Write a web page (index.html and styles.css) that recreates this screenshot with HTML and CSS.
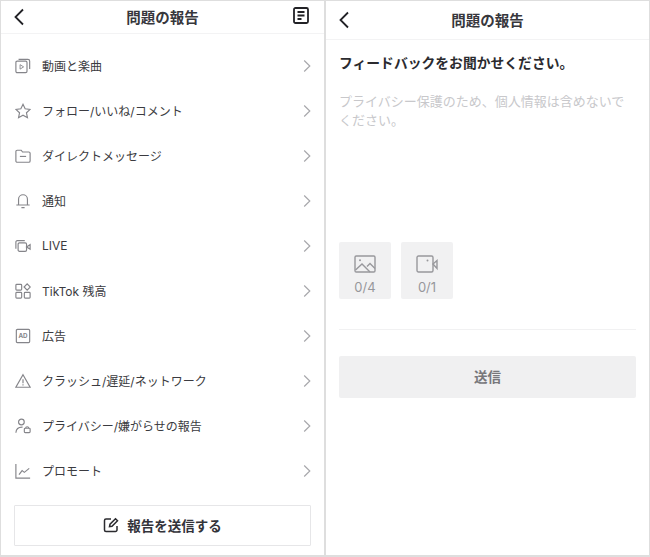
FILE: index.html
```html
<!DOCTYPE html>
<html lang="ja">
<head>
<meta charset="utf-8">
<title>問題の報告</title>
<link rel="stylesheet" href="styles.css">
</head>
<body>
<div class="screens">
  <section class="panel">
    <header class="bar bar-left">
      <svg class="back" viewBox="0 0 12 18"><path d="M10 1.500 2.500 9l7.500 7.500"/></svg>
      <h1>問題の報告</h1>
      <svg class="doc" viewBox="0 0 16 17"><rect x="1" y="1" width="14" height="15" rx="1.500"/><path d="M4.500 5h7M4.500 8.500h7M4.500 12h4"/></svg>
    </header>
    <ul class="list">
      <li class="row"><svg class="ico" viewBox="0 0 18 18"><rect x="1" y="3.500" width="12.500" height="13" rx="1.500"/><path d="M4 1.500h10.500a2 2 0 0 1 2 2v9"/><path d="M5.700 7.500v5l4-2.500z" stroke-width="1"/></svg><span>動画と楽曲</span><svg class="chev" viewBox="0 0 8 14"><path d="M1.200 1.500 6.800 7l-5.600 5.500"/></svg></li>
      <li class="row"><svg class="ico" viewBox="0 0 18 18"><path d="m9 1.500 2.400 5 5.600.700-4.100 3.800 1.100 5.500L9 13.800l-5 2.700 1.100-5.500L1 7.200l5.600-.7z"/></svg><span>フォロー/いいね/コメント</span><svg class="chev" viewBox="0 0 8 14"><path d="M1.200 1.500 6.800 7l-5.600 5.500"/></svg></li>
      <li class="row"><svg class="ico" viewBox="0 0 18 18"><path d="M1 4a1.500 1.500 0 0 1 1.500-1.500h4.500l1.500 2h7a1.500 1.500 0 0 1 1.500 1.500v8.500a1.500 1.500 0 0 1-1.500 1.500h-13A1.500 1.500 0 0 1 1 14.500z"/><path d="M5.500 9.500h7"/></svg><span>ダイレクトメッセージ</span><svg class="chev" viewBox="0 0 8 14"><path d="M1.200 1.500 6.800 7l-5.600 5.500"/></svg></li>
      <li class="row"><svg class="ico" viewBox="0 0 18 18"><path d="M1.500 13.500h15M4 13.500V7a5 5 0 0 1 10 0v6.500M7.200 16.500h3.600"/></svg><span>通知</span><svg class="chev" viewBox="0 0 8 14"><path d="M1.200 1.500 6.800 7l-5.600 5.500"/></svg></li>
      <li class="row"><svg class="ico" viewBox="0 0 18 18"><path d="M1 12V4.500A1.500 1.500 0 0 1 2.500 3H11"/><rect x="3.500" y="5.500" width="9.500" height="9.500" rx="1.500"/><path d="m13 10 4-2.500v5z"/></svg><span>LIVE</span><svg class="chev" viewBox="0 0 8 14"><path d="M1.200 1.500 6.800 7l-5.600 5.500"/></svg></li>
      <li class="row"><svg class="ico" viewBox="0 0 18 18"><rect x="1" y="1.500" width="6.500" height="6.500" rx="1"/><rect x="1" y="10.500" width="6.500" height="6.500" rx="1"/><rect x="10.500" y="10.500" width="6.500" height="6.500" rx="1"/><path d="m13.700 1 3.500 3.500-3.500 3.500-3.500-3.500z"/></svg><span>TikTok 残高</span><svg class="chev" viewBox="0 0 8 14"><path d="M1.200 1.500 6.800 7l-5.600 5.500"/></svg></li>
      <li class="row"><svg class="ico" viewBox="0 0 18 18"><rect x="1.500" y="1.500" width="15" height="15" rx="1.200"/><text x="9" y="11.500" class="ad">AD</text></svg><span>広告</span><svg class="chev" viewBox="0 0 8 14"><path d="M1.200 1.500 6.800 7l-5.600 5.500"/></svg></li>
      <li class="row"><svg class="ico" viewBox="0 0 18 18"><path d="M9 2 17 16H1z"/><path d="M9 7v4.500M9 12.700v1.300"/></svg><span>クラッシュ/遅延/ネットワーク</span><svg class="chev" viewBox="0 0 8 14"><path d="M1.200 1.500 6.800 7l-5.600 5.500"/></svg></li>
      <li class="row"><svg class="ico" viewBox="0 0 18 18"><circle cx="7.200" cy="4.500" r="3.200"/><path d="M1 16.500C1.300 12 3.700 10 8.500 10.200"/><rect x="10.500" y="11.500" width="6.500" height="5" rx="1"/><path d="M12 11.500a1.700 1.700 0 0 1 3.400 0"/></svg><span>プライバシー/嫌がらせの報告</span><svg class="chev" viewBox="0 0 8 14"><path d="M1.200 1.500 6.800 7l-5.600 5.500"/></svg></li>
      <li class="row"><svg class="ico" viewBox="0 0 18 18"><path d="M1 1V17H17"/><path d="m4.500 13 3.500-4.500 2.500 2L16 6"/></svg><span>プロモート</span><svg class="chev" viewBox="0 0 8 14"><path d="M1.200 1.500 6.800 7l-5.600 5.500"/></svg></li>
    </ul>
    <div class="action">
      <button class="report" type="button"><svg class="edit" viewBox="0 0 16 16"><path d="M8 2H3a1.500 1.500 0 0 0-1.500 1.500v9.500A1.500 1.500 0 0 0 3 14.500h9.500a1.500 1.500 0 0 0 1.500-1.500V9"/><path d="M6.500 9.700 7 7.200 12.500 1.800l2 2-5.500 5.500z"/></svg>報告を送信する</button>
    </div>
  </section>
  <section class="panel">
    <header class="bar bar-right">
      <svg class="back" viewBox="0 0 12 18"><path d="M10 1.500 2.500 9l7.500 7.500"/></svg>
      <h1>問題の報告</h1>
    </header>
    <div class="form">
      <h2>フィードバックをお聞かせください。</h2>
      <p class="hint">プライバシー保護のため、個人情報は含めないでください。</p>
      <div class="uploads">
        <div class="upload"><svg viewBox="0 0 22 18"><rect x="1" y="1" width="20" height="16" rx="1.200"/><path d="m1.500 15 6.500-6 8 8M13 11.500 16 8.500l5 5"/><circle cx="6" cy="5.200" r="1" class="dot"/></svg><span>0/4</span></div>
        <div class="upload"><svg viewBox="0 0 22 18"><rect x="1" y="1" width="16" height="16" rx="1.500"/><path d="m17 9 4-3.500v8z"/><circle cx="11.500" cy="5.500" r="1" class="dot"/></svg><span>0/1</span></div>
      </div>
      <div class="rule"></div>
      <button class="send" type="button">送信</button>
    </div>
  </section>
</div>
</body>
</html>
```
FILE: styles.css
```css
* { box-sizing: border-box; }
html, body { margin: 0; height: 100%; }
body {
  background: #dedede;
  font-family: Inter, "Noto Sans CJK JP", sans-serif;
  color: #2b2b2f;
}
.screens {
  display: flex;
  gap: 2px;
  width: 650px;
  height: 557px;
  padding: 1px 1px 2px 1px;
}
.panel {
  flex: 1 1 0;
  min-width: 0;
  background: #fff;
  display: flex;
  flex-direction: column;
}
.bar {
  position: relative;
  display: flex;
  align-items: center;
  justify-content: center;
  flex: none;
  border-bottom: 1px solid #f3f3f4;
}
.bar-left { height: 33px; padding-bottom: 2px; }
.bar-right { height: 39px; padding-bottom: 2px; }
.bar h1 {
  margin: 0;
  font-size: 14.500px;
  font-weight: 700;
  color: #37373c;
}
.back {
  position: absolute;
  left: 12px;
  top: 50%;
  width: 12px;
  height: 18px;
  margin-top: -9px;
  fill: none;
  stroke: #222226;
  stroke-width: 1.800;
}
.doc {
  position: absolute;
  right: 15px;
  top: 6px;
  width: 16px;
  height: 17px;
  fill: none;
  stroke: #222226;
  stroke-width: 1.800;
}
.list {
  list-style: none;
  margin: 0;
  padding: 9px 0 0;
  flex: none;
}
.row {
  display: flex;
  align-items: center;
  height: 45px;
  padding: 0 14px;
  font-size: 12px;
  color: #3b3b40;
}
.row span { flex: 1; }
.ico {
  width: 16px;
  height: 16px;
  margin-right: 11px;
  flex: none;
  fill: none;
  stroke: #85858a;
  stroke-width: 1.300;
}
.ad {
  font-size: 7px;
  font-weight: 700;
  text-anchor: middle;
  fill: #85858a;
  stroke: none;
}
.chev {
  width: 8px;
  height: 14px;
  flex: none;
  margin-right: -1px;
  fill: none;
  stroke: #a8a8ac;
  stroke-width: 1.200;
}
.action { padding: 12px 13px 0; }
.report {
  display: flex;
  align-items: center;
  justify-content: center;
  gap: 8px;
  width: 297px;
  height: 41px;
  padding: 0 0 2px;
  background: #fff;
  border: 1px solid #e6e6e8;
  border-radius: 1px;
  font: 700 13.500px Inter, "Noto Sans CJK JP", sans-serif;
  color: #33333a;
}
.edit {
  width: 16px;
  height: 16px;
  fill: none;
  stroke: #2b2b2f;
  stroke-width: 1.500;
}
.form {
  padding: 14px 13px 0;
  display: flex;
  flex-direction: column;
}
.form h2 {
  margin: 0;
  font-size: 13.800px;
  line-height: 19px;
  font-weight: 700;
  color: #2b2b2f;
}
.hint {
  margin: 19px 0 0;
  font-size: 13px;
  line-height: 19px;
  color: #c8c8cb;
}
.uploads {
  display: flex;
  gap: 10px;
  margin-top: 112px;
}
.upload {
  width: 52px;
  height: 57px;
  background: #f1f1f2;
  border-radius: 2px;
  display: flex;
  flex-direction: column;
  align-items: center;
  padding-top: 13px;
  font-size: 13px;
  color: #97979b;
}
.upload svg {
  width: 22px;
  height: 18px;
  fill: none;
  stroke: #98989c;
  stroke-width: 1.400;
}
.upload .dot { fill: #98989c; stroke: none; }
.upload span { margin-top: 7px; line-height: 14px; }
.rule {
  height: 1px;
  background: #f1f1f2;
  margin-top: 30px;
}
.send {
  margin-top: 26px;
  height: 42px;
  padding: 0 0 3px;
  border: 0;
  border-radius: 2px;
  background: #f0f0f1;
  font: 700 13.500px Inter, "Noto Sans CJK JP", sans-serif;
  color: #77777b;
}
```
